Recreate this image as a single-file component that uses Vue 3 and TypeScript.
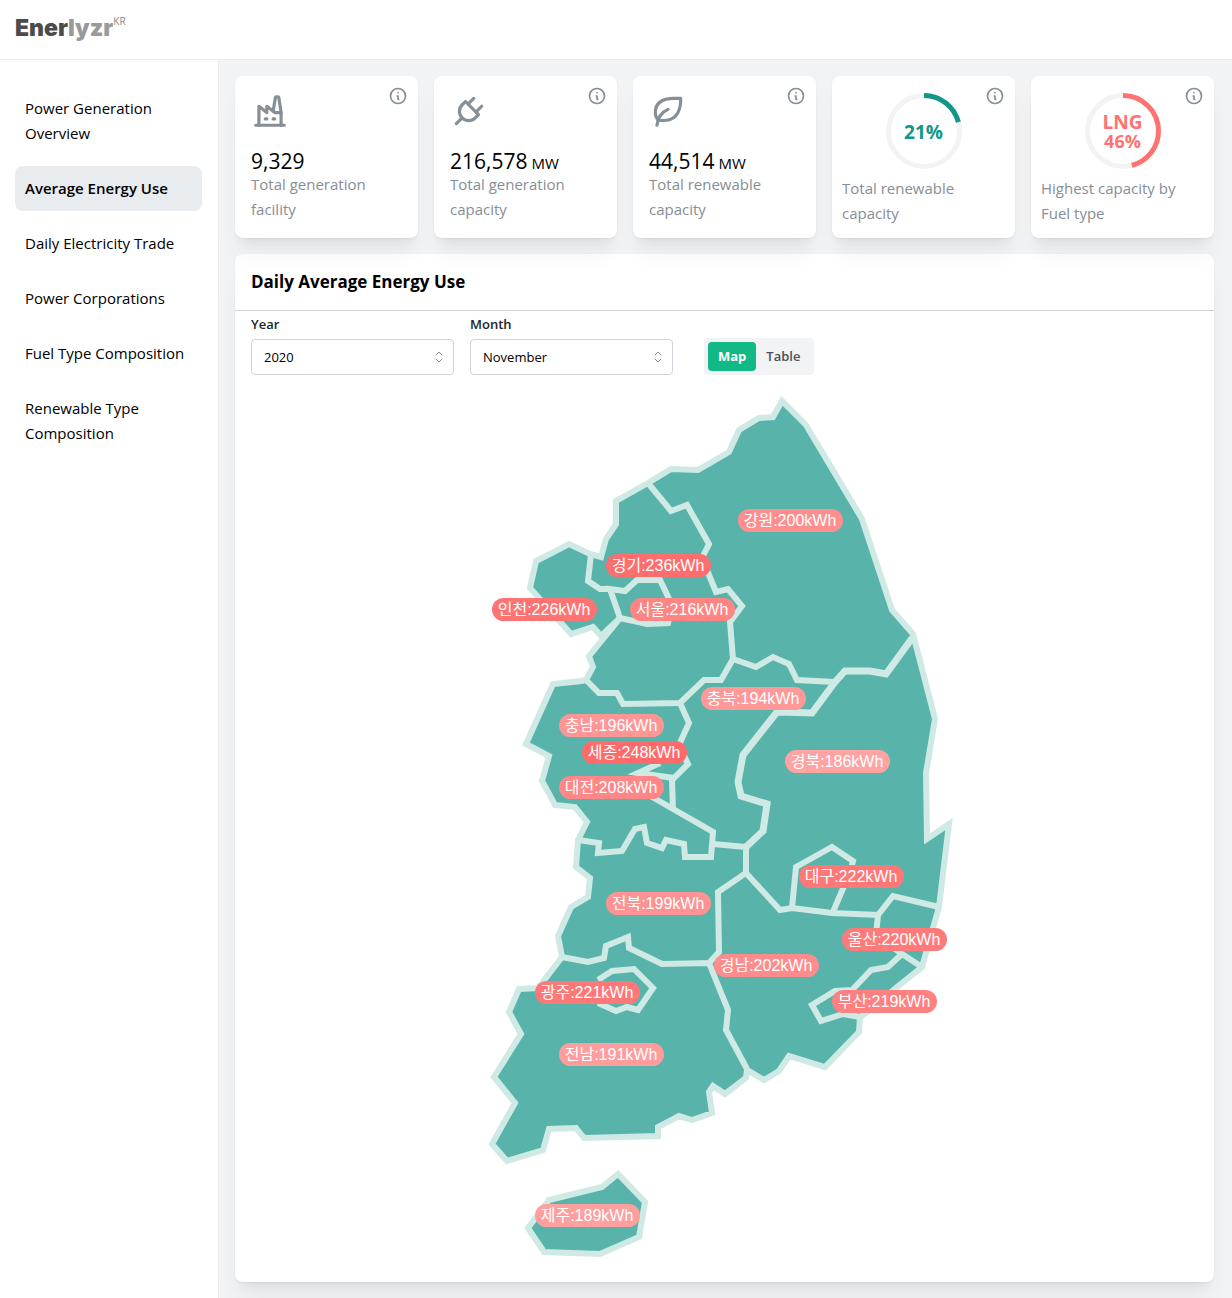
<script setup lang="ts">
import { ref } from 'vue'

interface Stat {
  icon: string[]
  value: string
  unit: string
  caption: string
}

interface Ring {
  lines: string[]
  percent: number
  color: string
  caption: string
}

interface Region {
  name: string
  usage: number
  x: number
  y: number
  color: string
}

const navItems = [
  'Power Generation Overview',
  'Average Energy Use',
  'Daily Electricity Trade',
  'Power Corporations',
  'Fuel Type Composition',
  'Renewable Type Composition',
]
const activeItem = ref('Average Energy Use')

const stats: Stat[] = [
  {
    icon: [
      'M3 21h18',
      'M5 21v-12l5 4v-4l5 4h4',
      'M19 21v-8l-1.436 -9.574a.5 .5 0 0 0 -.495 -.426h-1.145a.5 .5 0 0 0 -.494 .418l-1.43 8.582',
      'M9 17h1',
      'M14 17h1',
    ],
    value: '9,329',
    unit: '',
    caption: 'Total generation facility',
  },
  {
    icon: [
      'M9.785 6l8.215 8.215l-2.054 2.054a5.81 5.81 0 1 1 -8.215 -8.215l2.054 -2.054z',
      'M4 20l3.5 -3.5',
      'M15 4l-3.5 3.5',
      'M20 9l-3.5 3.5',
    ],
    value: '216,578',
    unit: 'MW',
    caption: 'Total generation capacity',
  },
  {
    icon: [
      'M5 21c.5 -4.5 2.5 -8 7 -10',
      'M9 18c6.218 0 10.5 -3.288 11 -12v-2h-4.014c-9 0 -11.986 4 -12 9c0 1 0 3 2 5h3z',
    ],
    value: '44,514',
    unit: 'MW',
    caption: 'Total renewable capacity',
  },
]

const rings: Ring[] = [
  { lines: ['21%'], percent: 21, color: '#129688', caption: 'Total renewable capacity' },
  { lines: ['LNG', '46%'], percent: 46, color: '#ff7272', caption: 'Highest capacity by Fuel type' },
]

const years = ['2020', '2019', '2018']
const months = ['January', 'February', 'March', 'April', 'May', 'June', 'July', 'August', 'September', 'October', 'November', 'December']
const year = ref('2020')
const month = ref('November')
const view = ref<'Map' | 'Table'>('Map')
const views: Array<'Map' | 'Table'> = ['Map', 'Table']

const regions: Region[] = [
  { name: '강원', usage: 200, x: 738, y: 509, color: '#ff8f8f' },
  { name: '경기', usage: 236, x: 606, y: 554, color: '#ff6e6e' },
  { name: '인천', usage: 226, x: 492, y: 598, color: '#ff7373' },
  { name: '서울', usage: 216, x: 630, y: 598, color: '#ff8484' },
  { name: '충북', usage: 194, x: 701, y: 687, color: '#ff9898' },
  { name: '충남', usage: 196, x: 559, y: 714, color: '#ff9696' },
  { name: '세종', usage: 248, x: 582, y: 741, color: '#ff6b6b' },
  { name: '대전', usage: 208, x: 559, y: 776, color: '#ff8787' },
  { name: '경북', usage: 186, x: 785, y: 750, color: '#ffa3a3' },
  { name: '전북', usage: 199, x: 606, y: 892, color: '#ff9292' },
  { name: '대구', usage: 222, x: 799, y: 865, color: '#ff7777' },
  { name: '울산', usage: 220, x: 842, y: 928, color: '#ff7b7b' },
  { name: '경남', usage: 202, x: 714, y: 954, color: '#ff8c8c' },
  { name: '부산', usage: 219, x: 832, y: 990, color: '#ff8080' },
  { name: '광주', usage: 221, x: 535, y: 981, color: '#ff7878' },
  { name: '전남', usage: 191, x: 559, y: 1043, color: '#ff9c9c' },
  { name: '제주', usage: 189, x: 535, y: 1204, color: '#ffa0a0' },
]

const mainland =
  '648,483 671,469 698,470 729,452 739,430 759,418 773,417 782,401 806,425 862,519 892,610 913,634 935,719 926,773 927,839 949,824 939,907 922,967 897,987 866,1013 860,1017 859,1032 825,1067 789,1056 779,1071 764,1080 747,1070 746,1078 725,1094 713,1086 709,1092 712,1113 692,1120 679,1116 658,1127 658,1136 584,1138 576,1128 549,1129 543,1150 507,1161 492,1144 515,1103 494,1077 521,1034 509,1012 519,989 538,988 562,957 558,936 571,907 588,897 590,878 576,867 578,840 587,822 575,807 555,805 542,781 549,756 526,744 553,684 582,681 586,680 593,667 589,656 620,618 601,636 593,627 571,634 530,588 536,561 569,544 590,554 601,557 606,539 616,524 616,501'

const island = '618,1174 645,1202 639,1237 600,1254 544,1252 528,1228 549,1200 602,1187'

const borders = [
  '648,483 671,511 687,505 709,544 702,558 716,592 728,589 742,606 730,622 733,659',
  '733,659 756,667 773,657 789,664 797,680 835,682',
  '586,680 599,693 617,693 623,704 680,703 704,680 721,680 733,659',
  '680,703 689,723 679,745 688,764 674,778 638,773 660,763',
  '672,780 673,810',
  '640,790 713,832 711,857 685,857 684,844 666,840 662,848 647,843 644,827 635,829 622,851 598,853 599,843 578,840',
  '713,844 746,847 746,873 718,892 719,952 709,963',
  '562,957 588,962 604,958 606,946 628,937 629,948 662,964 709,963 728,1010 726,1030 747,1069',
  '746,873 780,910 792,908 832,913 878,915 893,896 939,907',
  '792,908 796,867 832,847 853,861 850,872 833,912',
  '878,915 876,935 902,954 922,967',
  '902,954 888,967 871,970 852,990 835,991 812,1005 821,1021 843,1014 860,1017',
  '591,554 588,581 600,589 611,589',
  '620,618 610,589 625,591 637,580 660,580 672,605 668,623 647,624 620,618',
  '598,980 612,971 634,969 653,988 638,1010 627,1007 616,1011 598,1003',
]

const wideBorders = [
  '835,682 845,671 870,671 886,674 913,637',
  '835,682 812,713 777,712 743,755 738,782 741,796 767,804 763,831 746,847',
]
</script>

<template>
  <div class="app">
    <header class="topbar">
      <a class="logo" href="#"><span class="logo-dark">Ener</span><span class="logo-light">lyzr</span><sup>KR</sup></a>
    </header>

    <div class="body">
      <nav class="sidebar" aria-label="Sections">
        <a
          v-for="item in navItems"
          :key="item"
          href="#"
          class="nav-item"
          :class="{ active: item === activeItem }"
          @click.prevent="activeItem = item"
        >{{ item }}</a>
      </nav>

      <main class="content">
        <section class="cards" aria-label="Key figures">
          <article v-for="stat in stats" :key="stat.value" class="card">
            <svg class="stat-icon" viewBox="0 0 24 24" aria-hidden="true">
              <path v-for="d in stat.icon" :key="d" :d="d" />
            </svg>
            <p class="value">{{ stat.value }}<span v-if="stat.unit" class="unit">{{ stat.unit }}</span></p>
            <p class="caption">{{ stat.caption }}</p>
            <button class="info" type="button" aria-label="More information">
              <svg viewBox="0 0 24 24" aria-hidden="true">
                <circle cx="12" cy="12" r="9" />
                <path d="M12 8h.01M11 12h1v4h1" />
              </svg>
            </button>
          </article>

          <article v-for="ring in rings" :key="ring.caption" class="card ring-card">
            <div class="ring">
              <svg viewBox="0 0 76 76" aria-hidden="true">
                <circle class="ring-track" cx="38" cy="38" r="35.5" />
                <circle
                  class="ring-arc"
                  cx="38"
                  cy="38"
                  r="35.5"
                  pathLength="100"
                  :stroke="ring.color"
                  :stroke-dasharray="`${ring.percent} 100`"
                />
              </svg>
              <div class="ring-label" :style="{ color: ring.color }">
                <span v-for="line in ring.lines" :key="line">{{ line }}</span>
              </div>
            </div>
            <p class="caption">{{ ring.caption }}</p>
            <button class="info" type="button" aria-label="More information">
              <svg viewBox="0 0 24 24" aria-hidden="true">
                <circle cx="12" cy="12" r="9" />
                <path d="M12 8h.01M11 12h1v4h1" />
              </svg>
            </button>
          </article>
        </section>

        <section class="panel">
          <h1>Daily Average Energy Use</h1>

          <div class="controls">
            <div class="field">
              <label for="year">Year</label>
              <div class="select-box">
                <select id="year" v-model="year">
                  <option v-for="y in years" :key="y">{{ y }}</option>
                </select>
                <svg class="selector" viewBox="0 0 8 12" aria-hidden="true"><path d="M1 4l3-3l3 3M1 8l3 3l3-3" /></svg>
              </div>
            </div>
            <div class="field">
              <label for="month">Month</label>
              <div class="select-box">
                <select id="month" v-model="month">
                  <option v-for="m in months" :key="m">{{ m }}</option>
                </select>
                <svg class="selector" viewBox="0 0 8 12" aria-hidden="true"><path d="M1 4l3-3l3 3M1 8l3 3l3-3" /></svg>
              </div>
            </div>
            <div class="segmented">
              <button
                v-for="v in views"
                :key="v"
                type="button"
                :class="{ selected: v === view }"
                :aria-pressed="v === view"
                @click="view = v"
              >{{ v }}</button>
            </div>
          </div>

          <svg class="map" viewBox="484 390 481 876" role="img" aria-label="Average energy use by region">
            <g class="land">
              <polygon :points="mainland" />
              <polygon :points="island" />
            </g>
            <g class="borders">
              <polyline v-for="line in borders" :key="line" :points="line" />
            </g>
            <g class="borders wide">
              <polyline v-for="line in wideBorders" :key="line" :points="line" />
            </g>
            <g v-for="r in regions" :key="r.name" class="tag">
              <rect :x="r.x" :y="r.y" width="105" height="23" rx="11.5" :fill="r.color" />
              <text :x="r.x + 52" :y="r.y + 17">{{ r.name }}:{{ r.usage }}kWh</text>
            </g>
          </svg>
        </section>
      </main>
    </div>
  </div>
</template>

<style>
body {
  margin: 0;
  background: #f1f3f5;
}
</style>

<style scoped>
.app {
  min-height: 100vh;
  display: flex;
  flex-direction: column;
  box-sizing: border-box;
  font-family: "Open Sans", "Noto Sans", "Noto Sans CJK KR", sans-serif;
  font-size: 15px;
  line-height: 25px;
  color: #000;
}

.topbar {
  height: 59px;
  display: flex;
  align-items: center;
  padding: 0 15px;
  background: #fff;
  border-bottom: 1px solid #e9ecef;
}

.logo {
  display: flex;
  align-items: flex-start;
  padding-bottom: 3px;
  font-family: Inter, sans-serif;
  font-size: 23px;
  font-weight: 900;
  line-height: 24px;
  text-decoration: none;
}

.logo-dark {
  color: #4b4b4b;
}

.logo-light {
  color: #9a9a9a;
}

.logo sup {
  font-family: "Open Sans", sans-serif;
  font-size: 10px;
  font-weight: 400;
  line-height: 10px;
  color: #8a8a8a;
}

.body {
  flex: 1;
  display: flex;
}

.sidebar {
  flex: 0 0 218px;
  box-sizing: content-box;
  display: flex;
  flex-direction: column;
  gap: 10px;
  background: #fff;
  border-right: 1px solid #e9ecef;
  padding-top: 26px;
}

.nav-item {
  margin: 0 16px 0 15px;
  padding: 10px;
  border-radius: 8px;
  color: #000;
  text-decoration: none;
}

.nav-item.active {
  background: #e9ecef;
  font-weight: 600;
}

.content {
  flex: 1;
  min-width: 0;
  display: flex;
  flex-direction: column;
  gap: 16px;
  padding: 16px 18px 16px 16px;
}

.cards {
  display: grid;
  grid-template-columns: repeat(5, 1fr);
  gap: 16px;
}

.card,
.panel {
  background: #fff;
  border-radius: 8px;
  box-shadow:
    0 1px 3px rgba(0, 0, 0, 0.05),
    0 20px 25px -5px rgba(0, 0, 0, 0.05),
    0 10px 10px -5px rgba(0, 0, 0, 0.04);
}

.card {
  position: relative;
  padding: 16px;
}

.stat-icon {
  display: block;
  width: 38px;
  height: 38px;
  fill: none;
  stroke: #868e96;
  stroke-width: 2;
  stroke-linecap: round;
  stroke-linejoin: round;
}

.value {
  display: flex;
  align-items: baseline;
  gap: 4px;
  margin: 20px 0 0;
  font-size: 21px;
  font-weight: 500;
  line-height: 22px;
}

.unit {
  font-size: 15px;
  line-height: 16px;
}

.caption {
  margin: 0;
  color: #868e96;
}

.ring-card {
  padding: 16px 10px 11px;
}

.ring {
  position: relative;
  width: 76px;
  height: 76px;
  margin: 1px auto 7px;
}

.ring svg {
  display: block;
  transform: rotate(-90deg);
}

.ring circle {
  fill: none;
  stroke-width: 5;
}

.ring-track {
  stroke: #f1f3f5;
}

.ring-label {
  position: absolute;
  inset: 0;
  display: flex;
  flex-direction: column;
  align-items: center;
  justify-content: center;
  padding-top: 2px;
  font-size: 18px;
  font-weight: 700;
  line-height: 19px;
}

.ring-label span:first-child {
  font-size: 19px;
}

.info {
  position: absolute;
  top: 10px;
  right: 10px;
  width: 20px;
  height: 20px;
  padding: 0;
  border: 0;
  background: none;
}

.info svg {
  display: block;
  fill: none;
  stroke: #868e96;
  stroke-width: 2;
  stroke-linecap: round;
  stroke-linejoin: round;
}

.panel {
  flex: 1;
  padding-bottom: 16px;
}

.panel h1 {
  margin: 0;
  padding: 16px;
  border-bottom: 1px solid #ced4da;
  font-size: 17px;
  font-weight: 700;
  line-height: 24px;
}

.controls {
  display: flex;
  align-items: flex-end;
  gap: 16px;
  padding: 3px 16px 0;
}

.field {
  display: flex;
  flex-direction: column;
  gap: 5px;
  width: 203px;
}

.field label {
  font-size: 13px;
  font-weight: 600;
  line-height: 20px;
  color: #212529;
}

.select-box {
  position: relative;
}

.select-box select {
  display: block;
  appearance: none;
  box-sizing: border-box;
  width: 100%;
  height: 36px;
  padding: 0 12px;
  border: 1px solid #ced4da;
  border-radius: 4px;
  background: #fff;
  color: #000;
  font: inherit;
  font-size: 13px;
}

.selector {
  position: absolute;
  right: 11px;
  top: 12px;
  width: 8px;
  height: 12px;
  fill: none;
  stroke: #868e96;
  stroke-linecap: round;
  stroke-linejoin: round;
  pointer-events: none;
}

.segmented {
  display: flex;
  margin-left: 15px;
  padding: 4px;
  border-radius: 4px;
  background: #f1f3f5;
}

.segmented button {
  padding: 0 10px;
  border: 0;
  border-radius: 4px;
  background: none;
  color: #495057;
  font: inherit;
  font-size: 13px;
  font-weight: 600;
  line-height: 29px;
}

.segmented .selected {
  background: #12b886;
  color: #fff;
  font-weight: 700;
}

.map {
  display: block;
  width: 100%;
  max-width: 481px;
  margin: 15px auto 0;
}

.land {
  fill: #58b4aa;
  stroke: #cfe9e5;
  stroke-width: 6;
}

.borders {
  fill: none;
  stroke: #cfe9e5;
  stroke-width: 6;
}

.wide {
  stroke-width: 7;
}

.tag text {
  fill: #fff;
  font-family: "Liberation Sans", "Noto Sans CJK KR", sans-serif;
  font-size: 16px;
  text-anchor: middle;
}
</style>
